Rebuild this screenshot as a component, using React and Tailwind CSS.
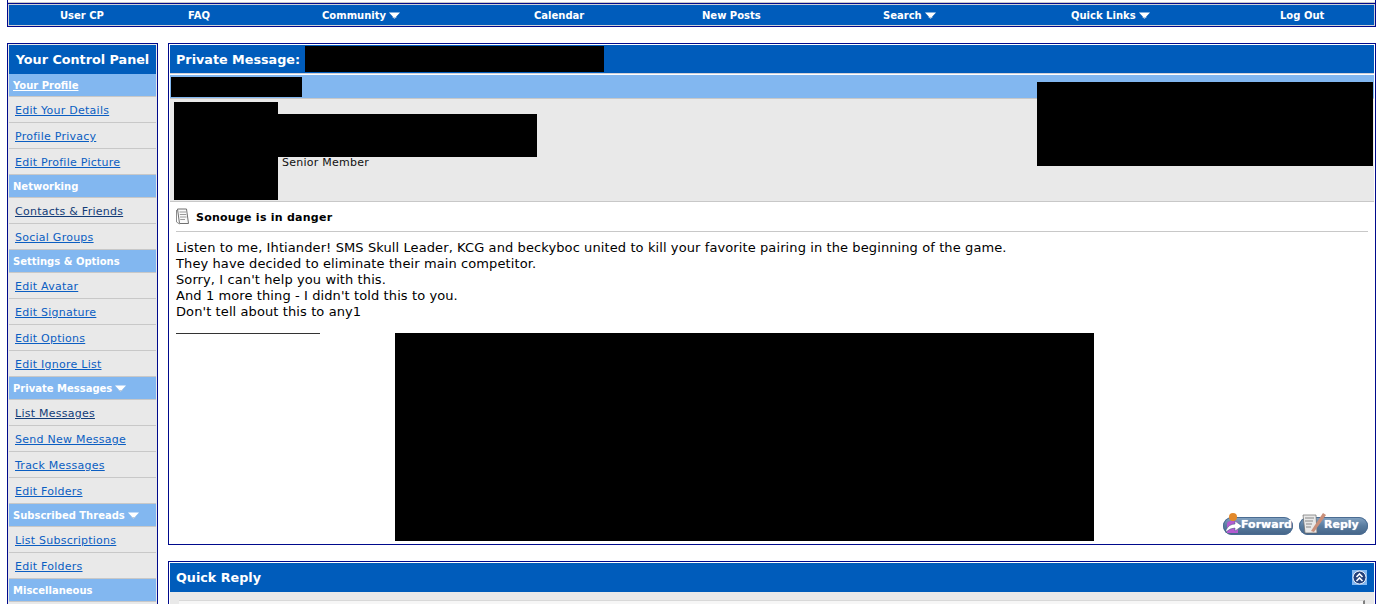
const Caret = () => (
  <svg width="11" height="7" viewBox="0 0 11 7" className="inline-block ml-[3px] align-[0px]">
    <path d="M0 0.5H11L5.5 6.5Z" fill="#fff" />
    <path d="M3 5L5.5 6.8L8 5" fill="#b9c9dc" />
  </svg>
);

const nav = [
  ["User CP", 0, 128],
  ["FAQ", 0, 134],
  ["Community", 1, 212],
  ["Calendar", 0, 168],
  ["New Posts", 0, 181],
  ["Search", 1, 188],
  ["Quick Links", 1, 209],
  ["Log Out", 0, 0],
];

const side = [
  ["h", "Your Profile", false, true],
  ["l", "Edit Your Details"],
  ["l", "Profile Privacy"],
  ["l", "Edit Profile Picture"],
  ["h", "Networking"],
  ["l", "Contacts & Friends", "dark"],
  ["l", "Social Groups"],
  ["h", "Settings & Options"],
  ["l", "Edit Avatar"],
  ["l", "Edit Signature"],
  ["l", "Edit Options"],
  ["l", "Edit Ignore List"],
  ["h", "Private Messages", true],
  ["l", "List Messages", "dark"],
  ["l", "Send New Message"],
  ["l", "Track Messages"],
  ["l", "Edit Folders"],
  ["h", "Subscribed Threads", true],
  ["l", "List Subscriptions"],
  ["l", "Edit Folders"],
  ["h", "Miscellaneous"],
  ["e", ""],
];

const PillButton = ({ label, w, children, textClass }) => (
  <div className="relative h-[23px]" style={{ width: w }}>
    <div className="absolute left-0 right-0 bottom-0 h-[18px] rounded-[9px] bg-gradient-to-b from-[#86a5c4] via-[#587c9f] to-[#456487] shadow-[inset_0_0_0_1px_#4a6c92]" />
    {children}
    <span className={`absolute bottom-[3px] text-[11px] leading-[14px] font-bold text-white [text-shadow:0_0_1px_#dfe8f2] ${textClass}`}>{label}</span>
  </div>
);

export default function App() {
  return (
    <div className="h-[604px] w-[1399px] overflow-hidden bg-white font-['DejaVu_Sans','Liberation_Sans',sans-serif] text-[11px] text-black">
      <div className="mx-[7px] w-[1369px] h-[27px] border-x border-b border-[#000a8c] bg-white flex flex-col">
        <div className="h-[2px] border-b border-[#c8c8c8] mb-0 bg-white box-content" />
        <div className="h-px bg-[#000a8c]" />
        <div className="flex-1 border border-[#d0d0d8] bg-[#005cbb] flex items-center pl-[51px] text-white font-bold text-[10px]">
          {nav.map(([t, c, w]) => (
            <div key={t} className="shrink-0 whitespace-nowrap" style={w ? { width: w } : undefined}>
              {t}
              {c ? <Caret /> : null}
            </div>
          ))}
        </div>
      </div>

      <div className="flex mt-[16px] ml-[7px] gap-[10px] items-start">
        <aside className="w-[151px] shrink-0 border border-[#000a8c] p-px bg-[#e9e9e9]">
          <div className="h-[29px] bg-[#005cbb] text-white font-bold text-[12.75px] flex items-center justify-center whitespace-nowrap">
            Your Control Panel
          </div>
          {side.map(([k, t, x, u], i) =>
            k === "h" ? (
              <div key={i} className="h-[23px] bg-[#82b7f0] border-b border-[#c8c8c8] pl-[4px] text-white text-[10px] font-bold flex items-center whitespace-nowrap">
                <span className={u ? "underline" : ""}>{t}</span>
                {x ? <Caret /> : null}
              </div>
            ) : k === "e" ? (
              <div key={i} className="h-[26px] bg-[#e9e9e9]" />
            ) : (
              <div key={i} className="h-[26px] bg-[#e9e9e9] border-b border-[#c8c8c8] pl-[6px] pt-[4px] tracking-[0.25px] flex items-center whitespace-nowrap">
                <span className={`underline ${x === "dark" ? "text-[#123c78]" : "text-[#0b5ec2]"}`}>{t}</span>
              </div>
            )
          )}
        </aside>

        <main className="w-[1208px] shrink-0">
          <section className="relative h-[502px] border border-[#000a8c] bg-white">
            <div className="h-[29px] m-px mb-0 bg-[#005cbb] border-b border-[#d0d0d8] flex items-center pl-[6px] text-white font-bold text-[12.75px]">
              <span className="pt-[2px]">Private Message:</span>
              <div className="ml-[5px] w-[299px] h-[26px] bg-black" />
            </div>
            <div className="h-[24px] mx-px mt-px bg-[#82b7f0] border-b border-[#c8c8c8] flex items-center pl-px">
              <div className="w-[131px] h-[20px] bg-black" />
            </div>
            <div className="relative h-[103px] mx-px bg-[#e9e9e9] border-b border-[#c8c8c8]">
              <div className="absolute left-[4px] top-[3px] w-[104px] h-[98px] bg-black" />
              <div className="absolute left-[108px] top-[15px] w-[259px] h-[43px] bg-black" />
              <div className="absolute left-[112px] top-[57px] leading-[13px] tracking-[0.25px] text-[#111]">Senior Member</div>
            </div>
            <div className="absolute left-[868px] top-[38px] w-[336px] h-[84px] bg-black" />

            <div className="px-[7px]">
              <div className="h-[30px] border-b border-[#c8c8c8] flex items-center">
                <svg width="14" height="17" viewBox="0 0 14 17" className="mr-[6px] mb-[1px]">
                  <path d="M1.5 1H10.5L12.5 15.5H3.5Z" fill="#fafafa" stroke="#707070" />
                  <path d="M0.5 2V14L3.5 16" fill="none" stroke="#8c8c8c" />
                  <path d="M3.5 4H10M3.8 6.5H10.3M4 9H10.6M4.2 11.5H9" stroke="#9a9a9a" />
                </svg>
                <b className="leading-none pt-[2px] tracking-[0.25px]">Sonouge is in danger</b>
              </div>
              <div className="mt-[8px] text-[13px] leading-[16px] tracking-[0.1px] whitespace-nowrap">
                <div>Listen to me, Ihtiander! SMS Skull Leader, KCG and beckyboc united to kill your favorite pairing in the beginning of the game.</div>
                <div>They have decided to eliminate their main competitor.</div>
                <div>Sorry, I can't help you with this.</div>
                <div>And 1 more thing - I didn't told this to you.</div>
                <div>Don't tell about this to any1</div>
              </div>
              <div className="mt-[13px] w-[144px] h-px bg-[#333]" />
              <div className="-mt-px ml-[219px] w-[699px] h-[208px] bg-black" />
            </div>

            <div className="absolute right-[7px] bottom-[9px] flex gap-[6px] items-end">
              <PillButton label="Forward" w={70} textClass="left-[18px]">
                <svg width="22" height="23" viewBox="0 0 22 23" className="absolute left-[1px] top-0">
                  <circle cx="9" cy="5" r="4" fill="#e2892a" />
                  <path d="M3 21V12Q3 9 7 9H12Q14 9 14 12V21Z" fill="#b45bd0" />
                  <path d="M2 18Q5 12 11 12V9L18 14L11 19V16Q6 16 2 20Z" fill="#fff" stroke="#3f5f85" strokeWidth="0.5" />
                </svg>
              </PillButton>
              <PillButton label="Reply" w={69} textClass="left-[25px]">
                <svg width="27" height="23" viewBox="0 0 27 23" className="absolute left-[2px] top-0">
                  <path d="M2 3H15L16 21H4Z" fill="#e8e8e8" stroke="#6a6a6a" strokeWidth="0.7" />
                  <path d="M4 6H13M4 9H12M5 12H11M5 15H10" stroke="#888" />
                  <path d="M10 19L22 1L25 3L13 20Z" fill="#c98f79" />
                </svg>
              </PillButton>
            </div>
          </section>

          <section className="mt-[16px] border border-[#000a8c] h-[60px] p-px bg-white">
            <div className="h-[29px] bg-[#005cbb] flex items-center pl-[6px] pr-[7px] justify-between text-white font-bold text-[12.75px]">
              Quick Reply
              <svg width="15" height="15" viewBox="0 0 15 15">
                <rect width="15" height="15" fill="#82b7f0" />
                <circle cx="7.5" cy="7.5" r="6.5" fill="#23407a" stroke="#e8eef8" />
                <path d="M4.5 7L7.5 4L10.5 7M4.5 11L7.5 8L10.5 11" fill="none" stroke="#fff" strokeWidth="1.6" />
              </svg>
            </div>
            <div className="h-[30px] bg-[#e9e9e9] pt-[8px] px-[9px]">
              <div className="h-full bg-[#f6f6f6] border-t border-[#d8d8d8] border-r-2 border-r-[#808080]" />
            </div>
          </section>
        </main>
      </div>
    </div>
  );
}
